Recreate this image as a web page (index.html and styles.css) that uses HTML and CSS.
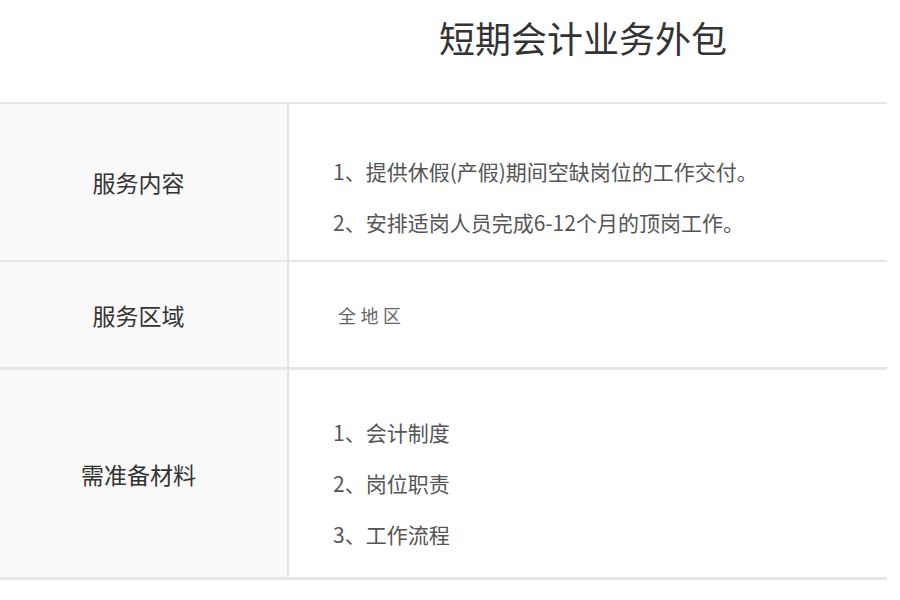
FILE: index.html
```html
<!DOCTYPE html>
<html lang="zh-CN">
<head>
<meta charset="utf-8">
<title>短期会计业务外包</title>
<link rel="stylesheet" href="styles.css">
</head>
<body>
<div class="page">
  <h1 class="title">短期会计业务外包</h1>
  <div class="table">
    <div class="row row-1">
      <div class="label">服务内容</div>
      <div class="content list">
        <p>1、提供休假(产假)期间空缺岗位的工作交付。</p>
        <p>2、安排适岗人员完成6-12个月的顶岗工作。</p>
      </div>
    </div>
    <div class="row row-2">
      <div class="label">服务区域</div>
      <div class="content area">全地区</div>
    </div>
    <div class="row row-3">
      <div class="label">需准备材料</div>
      <div class="content list">
        <p>1、会计制度</p>
        <p>2、岗位职责</p>
        <p>3、工作流程</p>
      </div>
    </div>
  </div>
</div>
</body>
</html>
```
FILE: styles.css
```css
html, body {
  margin: 0;
  padding: 0;
  background: #ffffff;
}
body {
  font-family: "Noto Sans CJK SC", "Noto Sans", sans-serif;
  color: #333333;
}
.page {
  width: 887px;
}
.title {
  margin: 0;
  height: 102px;
  padding-left: 439px;
  font-size: 36px;
  font-weight: normal;
  line-height: 74px;
  color: #333333;
  box-sizing: border-box;
}
.table {
  border-bottom: 3px solid #e6e6e6;
}
.row {
  display: grid;
  grid-template-columns: 289px 1fr;
  border-top: 2px solid #e6e6e6;
}
.row-3 {
  border-top-width: 3px;
}
.label {
  background: #f9f9f9;
  border-right: 2px solid #e3e3e3;
  display: flex;
  align-items: center;
  justify-content: center;
  font-size: 23px;
  color: #333333;
  padding-right: 10px;
}
.content {
  padding-left: 44px;
  color: #555555;
}
.list p {
  margin: 0;
  font-size: 21px;
  line-height: 51px;
}
.row-1 .content {
  padding-top: 42px;
  padding-bottom: 12px;
}
.row-2 .content {
  height: 105px;
  display: flex;
  align-items: center;
}
.row-3 .content {
  padding-top: 37px;
  padding-bottom: 17px;
}
.area {
  font-size: 18px;
  letter-spacing: 4.5px;
  color: #666666;
  padding-left: 49px;
}
```
